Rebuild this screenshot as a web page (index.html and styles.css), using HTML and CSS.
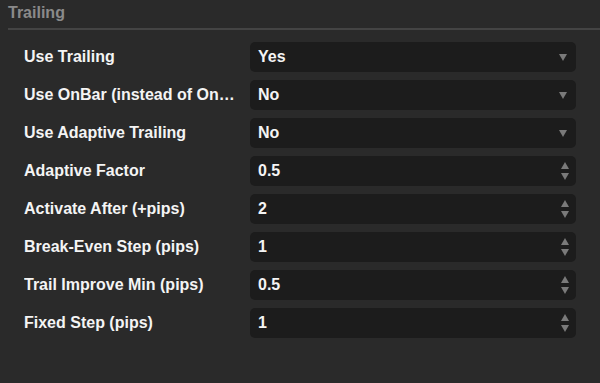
FILE: index.html
```html
<!DOCTYPE html>
<html>
<head>
  <title>Trailing</title>
  <link rel="stylesheet" href="styles.css">
</head>
<body>
  <div class="panel">
    <div class="panel-title">Trailing</div>

    <div class="fields">
      <div class="field">
        <div class="label">Use Trailing</div>
        <div class="box select">Yes<span class="caret"></span></div>
      </div>
      <div class="field">
        <div class="label">Use OnBar (instead of OnTick)</div>
        <div class="box select">No<span class="caret"></span></div>
      </div>
      <div class="field">
        <div class="label">Use Adaptive Trailing</div>
        <div class="box select">No<span class="caret"></span></div>
      </div>
      <div class="field">
        <div class="label">Adaptive Factor</div>
        <div class="box number">0.5<span class="spin"><i class="up"></i><i class="down"></i></span></div>
      </div>
      <div class="field">
        <div class="label">Activate After (+pips)</div>
        <div class="box number">2<span class="spin"><i class="up"></i><i class="down"></i></span></div>
      </div>
      <div class="field">
        <div class="label">Break-Even Step (pips)</div>
        <div class="box number">1<span class="spin"><i class="up"></i><i class="down"></i></span></div>
      </div>
      <div class="field">
        <div class="label">Trail Improve Min (pips)</div>
        <div class="box number">0.5<span class="spin"><i class="up"></i><i class="down"></i></span></div>
      </div>
      <div class="field">
        <div class="label">Fixed Step (pips)</div>
        <div class="box number">1<span class="spin"><i class="up"></i><i class="down"></i></span></div>
      </div>
    </div>
  </div>
</body>
</html>
```

FILE: styles.css
```css
html, body{ margin: 0; padding: 0; }
body{ background-color: #2a2a2a; font-family: "Liberation Sans", Arial, sans-serif; color: #f2f2f2; }

.panel{ padding: 0 0 0 8px; }
.panel-title{ height: 28px; line-height: 26px; font-size: 16px; font-weight: bold; color: #8a8a8a; border-bottom: 2px #444444 solid; }

.fields{ display: flex; flex-direction: column; gap: 8px; padding: 12px 24px 0 16px; }
.field{ display: grid; grid-template-columns: 216px 1fr; gap: 10px; align-items: center; }
.label{ font-size: 16px; font-weight: bold; white-space: nowrap; overflow: hidden; text-overflow: ellipsis; color: #f4f4f4; }

.box{ position: relative; height: 30px; line-height: 30px; padding: 0 8px; font-size: 16px; font-weight: bold; background-color: #1c1c1c; border-radius: 5px; color: #f4f4f4; }

.caret{ position: absolute; right: 9px; top: 12px; width: 0; height: 0; border-left: 4px solid transparent; border-right: 4px solid transparent; border-top: 7px solid #7a7a7a; }

.spin{ position: absolute; right: 7px; top: 6px; display: flex; flex-direction: column; gap: 4px; }
.spin i{ display: block; width: 0; height: 0; border-left: 4px solid transparent; border-right: 4px solid transparent; }
.spin .up{ border-bottom: 7px solid #7a7a7a; }
.spin .down{ border-top: 7px solid #7a7a7a; }
```
